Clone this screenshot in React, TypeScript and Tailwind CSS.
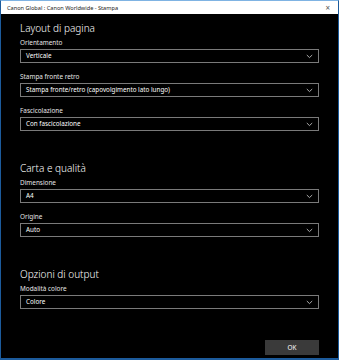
import React from "react";

const font = { fontFamily: '"Noto Sans", "Open Sans", sans-serif' };

function Chevron() {
  return (
    <svg width="7" height="5" viewBox="0 0 7 5" className="shrink-0">
      <path d="M0.8 1 L3.5 3.6 L6.2 1" fill="none" stroke="#bdbdbd" strokeWidth="0.9" />
    </svg>
  );
}

function Field({ label, value, mt }: { label: string; value: string; mt: string }) {
  return (
    <div className={`flex flex-col ${mt}`}>
      <div className="h-[8px] text-[6.4px] leading-[8px] text-[#e6e6e6]">{label}</div>
      <div className="mt-[2px] flex h-[14px] items-center justify-between border border-[#7a7a7a] pl-[5px] pr-[5px]">
        <span className="text-[6.3px] leading-[12px] text-white">{value}</span>
        <Chevron />
      </div>
    </div>
  );
}

function Heading({ text, mt }: { text: string; mt: string }) {
  return <div className={`h-[14px] text-[10px] font-light leading-[14px] text-white ${mt}`}>{text}</div>;
}

export default function App() {
  return (
    <div style={font} className="flex h-[360px] w-[339px] flex-col border-x border-b-2 border-[#1c5b9c] border-t border-t-[#7fb3e3] bg-black">
      <div className="flex h-[13px] shrink-0 items-center justify-between bg-white pl-[6px] pr-[8px]">
        <span className="text-[5.6px] leading-[8px] text-[#222]">Canon Global : Canon Worldwide - Stampa</span>
        <span className="text-[8px] leading-[8px] text-[#555]">×</span>
      </div>
      <div className="flex flex-1 flex-col px-[19px]">
        <Heading text="Layout di pagina" mt="mt-[7px]" />
        <Field label="Orientamento" value="Verticale" mt="mt-[4px]" />
        <Field label="Stampa fronte retro" value="Stampa fronte/retro (capovolgimento lato lungo)" mt="mt-[10px]" />
        <Field label="Fascicolazione" value="Con fascicolazione" mt="mt-[10px]" />
        <Heading text="Carta e qualità" mt="mt-[30px]" />
        <Field label="Dimensione" value="A4" mt="mt-[4px]" />
        <Field label="Origine" value="Auto" mt="mt-[10px]" />
        <Heading text="Opzioni di output" mt="mt-[30px]" />
        <Field label="Modalità colore" value="Colore" mt="mt-[4px]" />
        <div className="mt-auto mb-[3px] flex justify-end">
          <div className="flex h-[15px] w-[54px] items-center justify-center bg-[#3a3a3a] text-[6.4px] text-white">OK</div>
        </div>
      </div>
    </div>
  );
}
